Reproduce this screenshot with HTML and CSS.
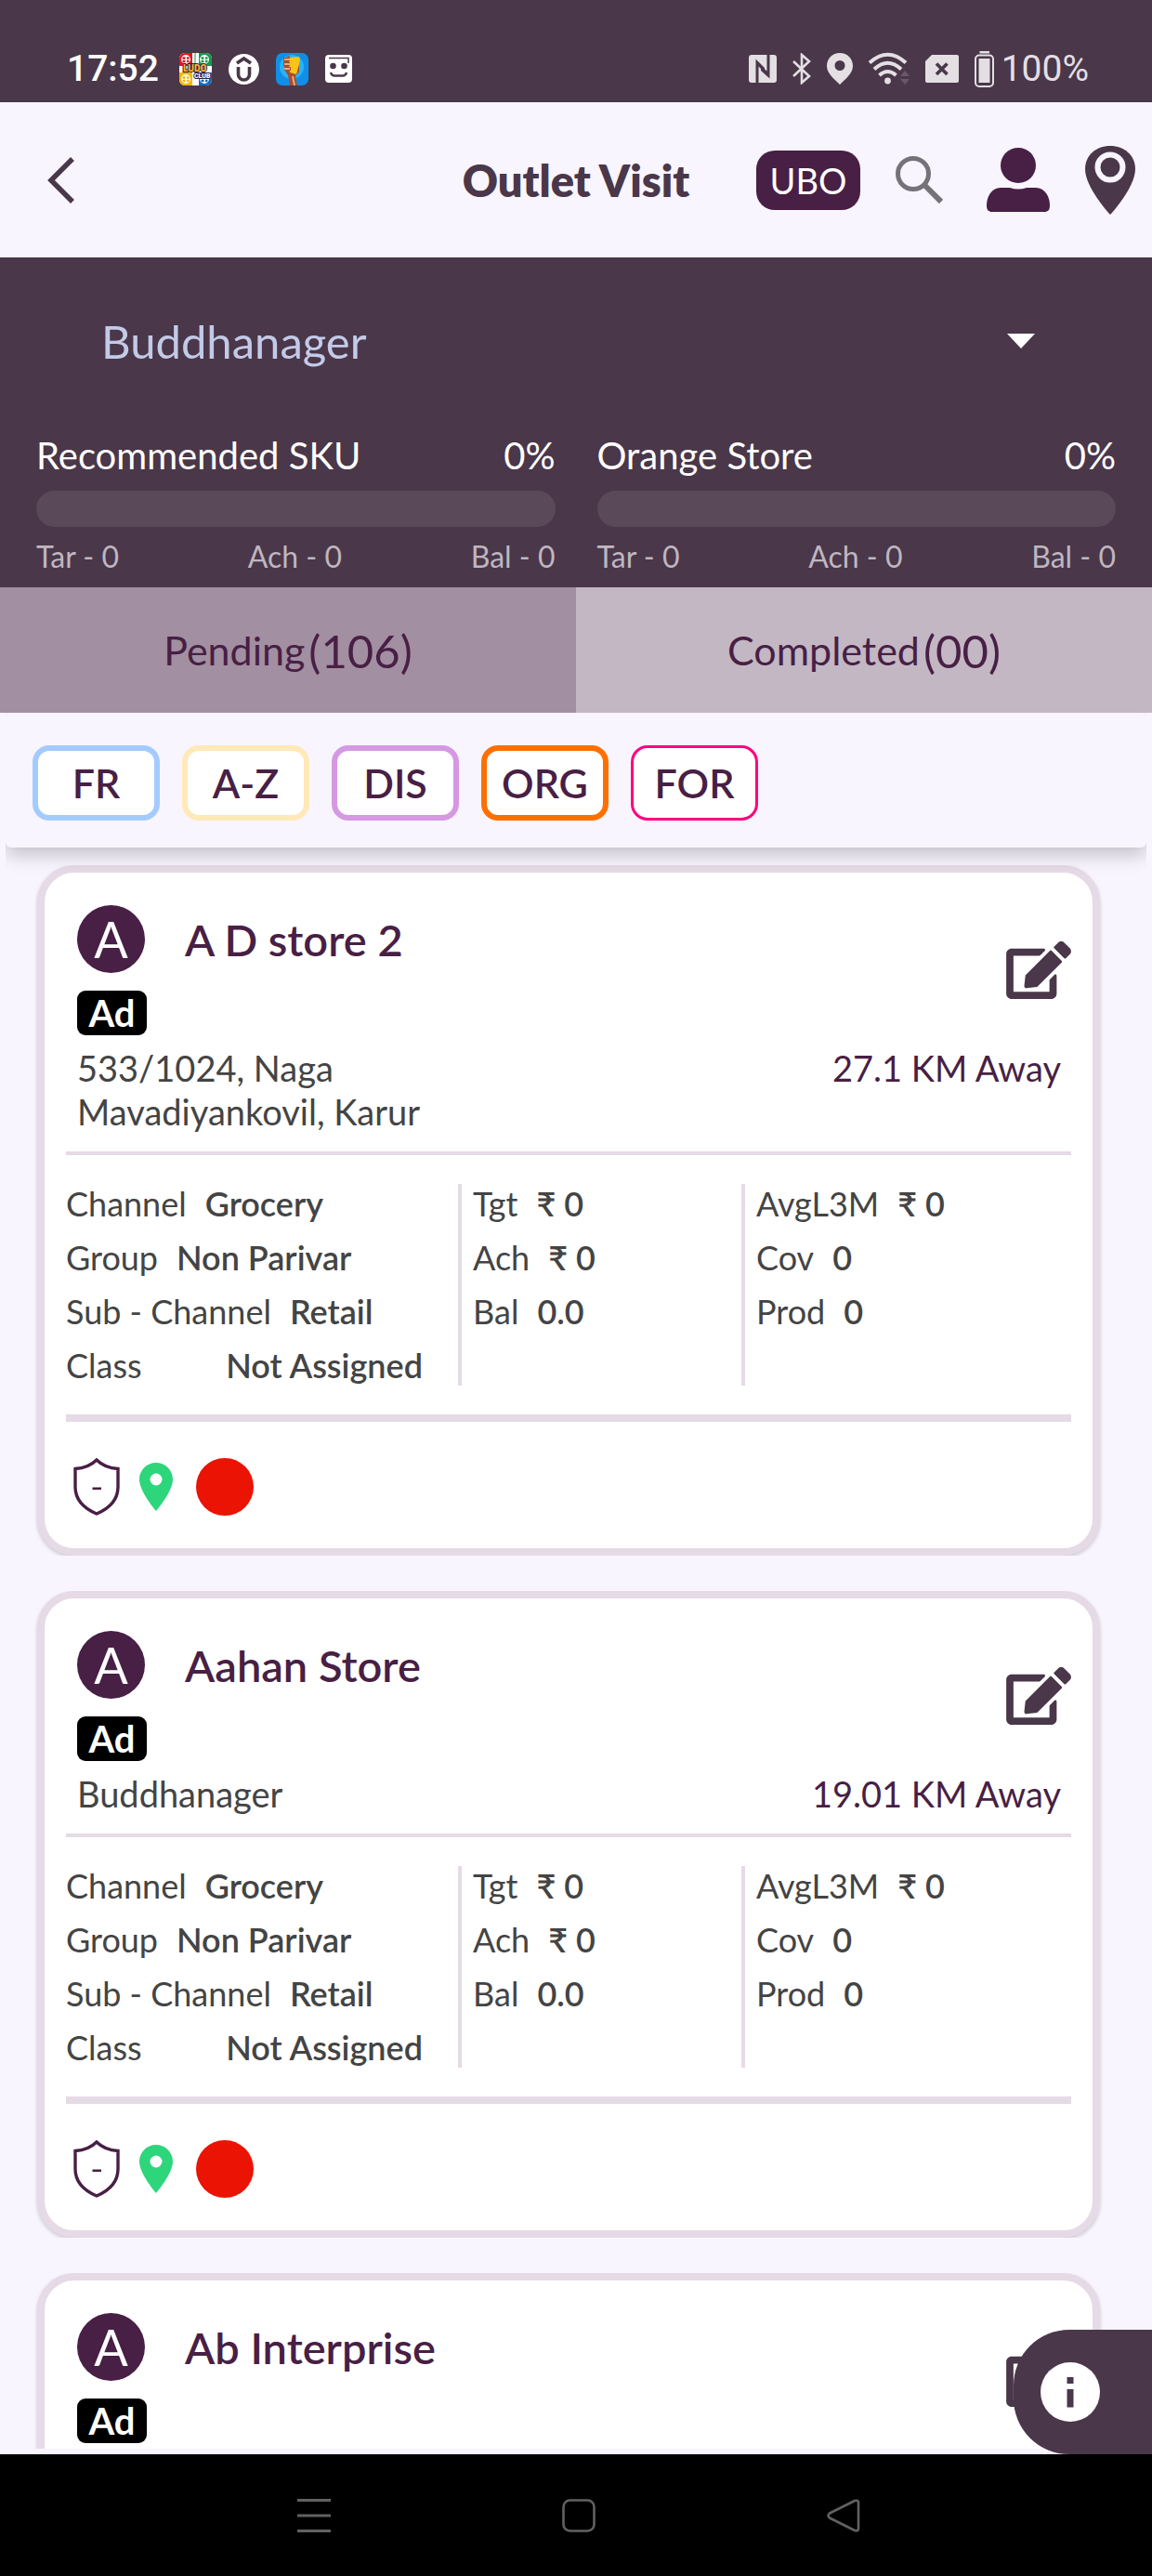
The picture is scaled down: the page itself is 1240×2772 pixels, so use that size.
FILE: index.html
```html
<!DOCTYPE html>
<html lang="en">
<head>
<meta charset="utf-8">
<meta name="viewport" content="width=device-width, initial-scale=1">
<title>Outlet Visit</title>
<link rel="stylesheet" href="styles.css">
</head>
<body>
<svg class="sprite" aria-hidden="true">
  <symbol id="edit" viewBox="0 0 576 512"><path fill="currentColor" d="M402.6 83.2l90.2 90.2c3.8 3.8 3.8 10 0 13.8L274.4 405.6l-92.8 10.3c-12.4 1.4-22.9-9.1-21.5-21.5l10.3-92.8L388.8 83.2c3.8-3.8 10-3.8 13.8 0zm162-22.9l-48.8-48.8c-15.2-15.2-39.9-15.2-55.2 0l-35.4 35.4c-3.8 3.8-3.8 10 0 13.8l90.2 90.2c3.8 3.8 10 3.8 13.8 0l35.4-35.4c15.2-15.3 15.2-40 0-55.2zM384 346.2V448H64V128h229.8c3.2 0 6.2-1.3 8.5-3.5l40-40c7.6-7.6 2.2-20.5-8.5-20.5H48C21.5 64 0 85.5 0 112v352c0 26.5 21.5 48 48 48h352c26.5 0 48-21.5 48-48V306.2c0-10.7-12.9-16-20.5-8.5l-40 40c-2.2 2.3-3.5 5.3-3.5 8.5z"/></symbol>
  <symbol id="shield" viewBox="0 0 50 62"><path fill="none" stroke="currentColor" stroke-width="3.4" d="M25 2C19 8 11 11 2 11.500V31C2 44 11 54 25 60 39 54 48 44 48 31V11.500C39 11 31 8 25 2Z"/><path fill="currentColor" d="M20.500 31.500h9.500v2.500h-9.500z"/></symbol>
  <symbol id="pin" viewBox="0 0 36 52"><path fill="#2dd57b" fill-rule="evenodd" d="M18 0C8 0 0 8 0 18c0 13 18 34 18 34s18-21 18-34C36 8 28 0 18 0Zm0 11.500a6.500 6.500 0 1 1 0 13 6.500 6.500 0 0 1 0-13Z"/></symbol>
</svg>

<div class="app">
  <div class="status-bar">
    <div class="status-left">
      <span class="clock">17:52</span>
      <svg width="35" height="35" viewBox="0 0 35 35" aria-hidden="true">
        <clipPath id="ludo"><rect width="35" height="35" rx="6"/></clipPath>
        <g clip-path="url(#ludo)"><rect width="35" height="35" fill="#fff"/>
        <path fill="#e8151b" d="M0 0h14v14H0z"/><path fill="#149a4a" d="M21 0h14v14H21z"/><path fill="#f6b800" d="M0 21h14v14H0z"/><path fill="#1268bd" d="M21 21h14v14H21z"/>
        <g fill="#fff"><circle cx="7" cy="7" r="5"/><circle cx="27" cy="7" r="5"/><circle cx="7" cy="28" r="5"/><circle cx="27" cy="28" r="5"/></g>
        <g stroke-width="2.500" stroke-dasharray="3 1.500"><path stroke="#e8151b" d="M3.500 5.500h7M3.500 9h7"/><path stroke="#149a4a" d="M23.500 5.500h7M23.500 9h7"/><path stroke="#f6b800" d="M3.500 26.500h7M3.500 30h7"/><path stroke="#1268bd" d="M23.500 26.500h7M23.500 30h7"/></g>
        <path stroke="#149a4a" d="M17 0v11"/></g>
        <text class="ludo-name" x="4" y="20">LUDO</text><text class="ludo-sub" x="16" y="27">CLUB</text>
      </svg>
      <svg width="33" height="33" viewBox="0 0 33 33" aria-hidden="true"><circle cx="16.500" cy="16.500" r="16.500" fill="#fff"/><path fill="none" stroke="#4a3749" stroke-width="3.600" d="M10.500 14v8a6 6 0 0 0 12 0v-8M9 10l7.500-5 7.500 5"/></svg>
      <svg width="35" height="35" viewBox="0 0 35 35" aria-hidden="true"><rect width="35" height="35" rx="7" fill="#118fe8"/><circle cx="17" cy="15" r="13" fill="#25b4fa"/><path fill="#a34e31" d="M9 6l5-3 3 5 8 6v6l-4 5 2 10h-8l-2-11-4-6z"/><path fill="#f9c414" d="M14 5l11-1 1 4-4 15-7-2-1-6z"/><path fill="none" stroke="#a34e31" stroke-width="4" d="M8 7h7M8 12h7M9 17h7"/><path fill="none" stroke="#eba979" stroke-width="2" d="M9 7h6M9 12h6M9 17h6M18 25l2 10"/></svg>
      <svg width="29" height="30" viewBox="0 0 29 30" aria-hidden="true"><rect width="29" height="30" rx="4" fill="#fff"/><path fill="none" stroke="#4a3749" stroke-width="1.500" d="M4 3.500h21V9"/><circle cx="8.500" cy="12" r="3.300" fill="#4a3749"/><circle cx="20.500" cy="12" r="3.300" fill="#4a3749"/><path fill="none" stroke="#4a3749" stroke-width="2.500" d="M6 19q1 3.500 4 3.500h9q3 0 4-3.500"/></svg>
    </div>
    <div class="status-right">
      <svg width="30" height="30" viewBox="0 0 30 30" aria-hidden="true"><rect width="30" height="30" rx="3" fill="#e3dfe3"/><path fill="#4a3749" d="M7.500 30V4.500L17 14V19L10.500 12.500V30ZM22.500 0V25.500L13 17V12L19.500 17.500V0Z"/></svg>
      <svg width="20" height="34" viewBox="0 0 20 34" aria-hidden="true"><path fill="none" stroke="#e3dfe3" stroke-width="2.600" d="M1 9l17 16-8 7V2l8 7L1 25"/></svg>
      <svg width="28" height="34" viewBox="0 0 28 34" aria-hidden="true"><path fill="#e3dfe3" fill-rule="evenodd" d="M14 0C6 0 0 6 0 14c0 8 8 14 14 20 6-6 14-12 14-20C28 6 22 0 14 0Zm0 8a5.500 5.500 0 1 1 0 11 5.500 5.500 0 0 1 0-11Z"/></svg>
      <svg width="44" height="36" viewBox="0 0 44 36" aria-hidden="true"><g fill="none" stroke="#e3dfe3" stroke-width="4"><path d="M1 11.500Q20.500-6 40 11.500"/><path d="M6 18.500Q20.500 5 35 18.500"/><path d="M11.500 25Q20.500 17 29.500 25"/></g><circle cx="20.500" cy="31" r="3.400" fill="#e3dfe3"/><path fill="#6b566a" d="M34 26l5-6 5 6zM34 29h10l-5 6z"/></svg>
      <svg width="36" height="30" viewBox="0 0 36 30" aria-hidden="true"><path fill="#e3dfe3" d="M7 0h27q2 0 2 2v26q0 2-2 2H2q-2 0-2-2V7z"/><path stroke="#4a3749" stroke-width="3.600" d="M12 9.500l11.500 11.500M23.500 9.500L12 21"/></svg>
      <div class="battery">
        <svg width="21" height="39" viewBox="0 0 21 39" aria-hidden="true"><path fill="#e3dfe3" d="M5.500 0h10.500v2.500H5.500zM4.500 8h12v26h-12z"/><rect x="1" y="4.500" width="19" height="33.500" rx="4" fill="none" stroke="#e3dfe3" stroke-width="2"/></svg>
        <span>100%</span>
      </div>
    </div>
  </div>

  <header class="header">
    <button class="icon-button back" aria-label="Back"><svg width="30" height="50" viewBox="0 0 30 50"><path fill="none" stroke="#4a3749" stroke-width="5.500" d="M27 2L4 25l23 23"/></svg></button>
    <h1>Outlet Visit</h1>
    <div class="actions">
      <button class="ubo">UBO</button>
      <button class="icon-button search" aria-label="Search"><svg width="51" height="51" viewBox="0 0 51 51"><circle cx="19" cy="19" r="16.500" fill="none" stroke="#757378" stroke-width="5"/><path stroke="#757378" stroke-width="6" d="M32 32l17 17"/></svg></button>
      <button class="icon-button" aria-label="Profile"><svg width="68" height="69" viewBox="0 0 68 69"><circle cx="34" cy="19" r="19" fill="#481f45"/><path fill="#481f45" d="M15 43h10q9 3 18 0h10c10 0 15 10 15 19 0 5-2 7-6 7H6c-4 0-6-2-6-7 0-9 5-19 15-19Z"/></svg></button>
      <button class="icon-button" aria-label="Map"><svg width="54" height="74" viewBox="0 0 54 74"><path fill="#4a3749" d="M27 0C12 0 0 10 0 25c0 20 27 49 27 49s27-29 27-49C54 10 42 0 27 0Z"/><circle cx="27" cy="23" r="13.500" fill="#4a3749" stroke="#f8f5ff" stroke-width="6"/></svg></button>
    </div>
  </header>

  <section class="summary">
    <div class="beat">
      <select aria-label="Beat"><option>Buddhanager</option></select>
      <svg width="30" height="16" viewBox="0 0 30 16" aria-hidden="true"><path fill="#fff" d="M0 0h30L15 16z"/></svg>
    </div>
    <div class="goals">
      <div class="goal">
        <div class="goal-head"><span>Recommended SKU</span><span>0%</span></div>
        <div class="track" role="progressbar" aria-label="Recommended SKU" aria-valuenow="0"></div>
        <div class="goal-foot"><span>Tar - 0</span><span>Ach - 0</span><span>Bal - 0</span></div>
      </div>
      <div class="goal">
        <div class="goal-head"><span>Orange Store</span><span>0%</span></div>
        <div class="track" role="progressbar" aria-label="Orange Store" aria-valuenow="0"></div>
        <div class="goal-foot"><span>Tar - 0</span><span>Ach - 0</span><span>Bal - 0</span></div>
      </div>
    </div>
  </section>

  <nav class="tabs">
    <button class="tab tab-active">Pending<span>(106)</span></button>
    <button class="tab">Completed<span>(00)</span></button>
  </nav>

  <div class="filters">
    <button class="chip chip-fr">FR</button>
    <button class="chip chip-az">A-Z</button>
    <button class="chip chip-dis">DIS</button>
    <button class="chip chip-org">ORG</button>
    <button class="chip chip-for">FOR</button>
  </div>

  <main class="list">
    <article class="card">
      <div class="card-head">
        <div>
          <div class="store"><span class="avatar">A</span><h2>A D store 2</h2></div>
          <span class="ad">Ad</span>
        </div>
        <button class="icon-button" aria-label="Edit A D store 2"><svg width="70" height="62"><use href="#edit"/></svg></button>
      </div>
      <div class="place"><address>533/1024, Naga<br>Mavadiyankovil, Karur</address><span>27.1 KM Away</span></div>
      <div class="facts">
        <dl><div><dt>Channel</dt><dd>Grocery</dd></div><div><dt>Group</dt><dd>Non Parivar</dd></div><div><dt>Sub - Channel</dt><dd>Retail</dd></div><div class="spread"><dt>Class</dt><dd>Not Assigned</dd></div></dl>
        <dl><div><dt>Tgt</dt><dd>₹ 0</dd></div><div><dt>Ach</dt><dd>₹ 0</dd></div><div><dt>Bal</dt><dd>0.0</dd></div></dl>
        <dl><div><dt>AvgL3M</dt><dd>₹ 0</dd></div><div><dt>Cov</dt><dd>0</dd></div><div><dt>Prod</dt><dd>0</dd></div></dl>
      </div>
      <div class="badges"><svg width="50" height="62"><use href="#shield"/></svg><svg width="36" height="52"><use href="#pin"/></svg><span class="dot"></span></div>
    </article>

    <article class="card">
      <div class="card-head">
        <div>
          <div class="store"><span class="avatar">A</span><h2>Aahan Store</h2></div>
          <span class="ad">Ad</span>
        </div>
        <button class="icon-button" aria-label="Edit Aahan Store"><svg width="70" height="62"><use href="#edit"/></svg></button>
      </div>
      <div class="place"><address>Buddhanager</address><span>19.01 KM Away</span></div>
      <div class="facts">
        <dl><div><dt>Channel</dt><dd>Grocery</dd></div><div><dt>Group</dt><dd>Non Parivar</dd></div><div><dt>Sub - Channel</dt><dd>Retail</dd></div><div class="spread"><dt>Class</dt><dd>Not Assigned</dd></div></dl>
        <dl><div><dt>Tgt</dt><dd>₹ 0</dd></div><div><dt>Ach</dt><dd>₹ 0</dd></div><div><dt>Bal</dt><dd>0.0</dd></div></dl>
        <dl><div><dt>AvgL3M</dt><dd>₹ 0</dd></div><div><dt>Cov</dt><dd>0</dd></div><div><dt>Prod</dt><dd>0</dd></div></dl>
      </div>
      <div class="badges"><svg width="50" height="62"><use href="#shield"/></svg><svg width="36" height="52"><use href="#pin"/></svg><span class="dot"></span></div>
    </article>

    <article class="card">
      <div class="card-head">
        <div>
          <div class="store"><span class="avatar">A</span><h2>Ab Interprise</h2></div>
          <span class="ad">Ad</span>
        </div>
        <button class="icon-button" aria-label="Edit Ab Interprise"><svg width="70" height="62"><use href="#edit"/></svg></button>
      </div>
    </article>
  </main>

  <footer class="system-nav">
    <button class="info" aria-label="Information"><svg width="64" height="64" viewBox="0 0 64 64"><circle cx="32" cy="32" r="32" fill="#fff"/><path fill="#4a3749" d="M28.500 16h7v7h-7zM28.500 29h7v19.500h-7z"/></svg></button>
    <button class="icon-button" aria-label="Recent apps"><svg width="36" height="36" viewBox="0 0 36 36"><path stroke="#616161" stroke-width="3" d="M0 1.500h36M0 18h36M0 34.500h36"/></svg></button>
    <button class="icon-button" aria-label="Home"><svg width="36" height="36" viewBox="0 0 36 36"><rect x="1.500" y="1.500" width="33" height="33" rx="7" fill="none" stroke="#616161" stroke-width="2.600"/></svg></button>
    <button class="icon-button" aria-label="Go back"><svg width="36" height="36" viewBox="0 0 36 36"><path fill="none" stroke="#616161" stroke-width="2.600" stroke-linejoin="round" d="M3 15.500 30 2q4-1 4 2v28q0 3-4 2L3 20.500q-3-2.500 0-5Z"/></svg></button>
  </footer>
</div>
</body>
</html>
```
FILE: styles.css
```css
:root {
  --ink: #4a3749;
  --plum: #481f45;
  --paper: #f8f5ff;
  --line: #e6dae6;
  --text: #444444;
}

* { box-sizing: border-box; }

body {
  margin: 0;
  background: var(--paper);
  color: var(--text);
  font-family: Lato, "Noto Sans", sans-serif;
}

h1, h2, dl, dd { margin: 0; }

button, select {
  margin: 0;
  padding: 0;
  border: 0;
  background: none;
  color: inherit;
  font: inherit;
}

svg { display: block; flex: none; }

.sprite {
  position: absolute;
  width: 0;
  height: 0;
}

.app {
  display: flex;
  flex-direction: column;
  height: 100vh;
}

/* Status bar */
.status-bar {
  display: flex;
  flex: none;
  justify-content: space-between;
  padding: 50px 68px 12px 72px;
  background: var(--ink);
  color: #e3dfe3;
  font-family: Roboto, sans-serif;
  font-size: 39px;
  line-height: 48px;
}

.status-left, .status-right {
  display: flex;
  align-items: center;
}

.status-left { gap: 18px; }
.status-right { gap: 17px; }
.clock { margin-right: 4px; color: #ffffff; font-weight: 500; }
.battery { display: flex; align-items: center; gap: 8px; }

.ludo-name, .ludo-sub {
  font-weight: 900;
  stroke: #2a1d4a;
  stroke-width: 2px;
  paint-order: stroke;
}

.ludo-name { fill: #ffb62e; font-size: 10px; }
.ludo-sub { fill: #ffffff; font-size: 7px; }

/* Header */
.header {
  display: grid;
  flex: none;
  grid-template-columns: 1fr auto 1fr;
  align-items: center;
  height: 167px;
  padding: 0 18px 0 18px;
}

.header h1 {
  color: var(--ink);
  font-size: 47px;
  font-weight: 800;
  line-height: 60px;
}

.back { justify-self: start; padding-left: 33px; }

.actions {
  display: flex;
  align-items: center;
  justify-content: flex-end;
  gap: 38px;
}

.ubo {
  width: 112px;
  height: 64px;
  border-radius: 20px;
  background: var(--plum);
  color: #ffffff;
  font-size: 38px;
}

.search { padding-right: 9px; }

/* Summary */
.summary {
  flex: none;
  padding: 55px 39px 14px;
  background: var(--ink);
  color: #ffffff;
}

.beat {
  display: flex;
  align-items: center;
  padding: 0 87px 0 70px;
}

.beat select {
  flex: 1;
  height: 70px;
  appearance: none;
  color: #c3cae8;
  font-size: 49px;
}

.goals {
  display: grid;
  grid-template-columns: 1fr 1fr;
  gap: 45px;
  padding-top: 63px;
}

.goal-head, .goal-foot {
  display: flex;
  justify-content: space-between;
}

.goal-head { font-size: 40px; line-height: 50px; }
.goal-foot { color: #bfb6c0; font-size: 32px; line-height: 38px; }

.track {
  height: 39px;
  margin: 13px 0;
  border-radius: 20px;
  background: #5a4958;
}

/* Tabs */
.tabs {
  display: grid;
  flex: none;
  grid-template-columns: 1fr 1fr;
}

.tab {
  display: flex;
  align-items: center;
  justify-content: center;
  gap: 4px;
  height: 135px;
  background: #c3b7c4;
  color: var(--plum);
  font-size: 43px;
}

.tab-active { background: #a28fa1; }
.tab span { font-size: 49px; }

/* Filters */
.filters {
  position: relative;
  z-index: 1;
  display: flex;
  flex: none;
  gap: 24px;
  margin: 0 6px;
  padding: 35px 29px 29px;
  border-radius: 6px;
  background: var(--paper);
  box-shadow: 0 8px 20px #00000038;
  clip-path: inset(0 0 -32px);
}

.chip {
  width: 137px;
  height: 81px;
  border: 6px solid;
  border-radius: 18px;
  background: #ffffff;
  font-size: 43px;
  font-weight: 600;
  text-align: center;
}

.chip-fr { border-color: #a4cbff; }
.chip-az { border-color: #ffe9b8; }
.chip-dis { border-color: #d698e3; }
.chip-org { border-color: #ff6f00; }
.chip-for { border: 3px solid #ff0080; }
.chip { color: var(--plum); }

/* Outlet cards */
.list {
  display: flex;
  flex: 1;
  flex-direction: column;
  gap: 38px;
  min-height: 0;
  margin-bottom: 6px;
  padding: 19px 56px 0 40px;
  overflow: hidden;
}

.card {
  flex: none;
  padding: 35px 23px;
  border: 8px solid var(--line);
  border-radius: 40px;
  background: #ffffff;
  box-shadow: 0 2px 4px #00000030;
  clip-path: inset(0 -3px 0 -3px);
}

.card-head {
  display: flex;
  align-items: center;
  justify-content: space-between;
  padding-left: 12px;
  color: var(--ink);
}

.store { display: flex; align-items: center; gap: 43px; }

.store h2 {
  color: var(--plum);
  font-size: 47px;
  font-weight: 600;
  line-height: 60px;
}

.avatar {
  width: 73px;
  height: 73px;
  border-radius: 50%;
  background: var(--plum);
  color: #ffffff;
  font-size: 54px;
  line-height: 73px;
  text-align: center;
}

.ad {
  display: block;
  width: 75px;
  height: 48px;
  margin-top: 19px;
  border-radius: 9px;
  background: #000000;
  color: #ffffff;
  font-size: 40px;
  font-weight: 700;
  line-height: 48px;
  text-align: center;
}

.place {
  display: flex;
  justify-content: space-between;
  padding: 12px 11px 19px 12px;
  border-bottom: 4px solid var(--line);
  font-size: 38px;
  line-height: 47px;
}

.place address { font-style: normal; }
.place span { color: var(--plum); }

.facts {
  display: grid;
  grid-template-columns: 426fr 305fr 351fr;
  padding: 31px 0;
  border-bottom: 8px solid var(--line);
  font-size: 36px;
  line-height: 43px;
}

.facts dl {
  display: flex;
  flex-direction: column;
  gap: 15px;
  padding-left: 12px;
}

.facts dl:first-child { padding: 0 38px 0 0; }
.facts dl:not(:last-child) { border-right: 4px solid var(--line); }
.facts dl > div { display: flex; gap: 20px; }
.facts dl > .spread { justify-content: space-between; }
.facts dd { font-weight: 600; }

.badges {
  display: flex;
  align-items: center;
  padding: 39px 0 0 8px;
  gap: 21px;
  color: var(--plum);
}

.dot {
  width: 62px;
  height: 62px;
  margin-left: 4px;
  border-radius: 50%;
  background: #eb1303;
}

/* System navigation */
.system-nav {
  position: relative;
  display: flex;
  flex: none;
  align-items: center;
  justify-content: center;
  gap: 249px;
  height: 131px;
  padding-left: 6px;
  background: #000000;
}

.info {
  position: absolute;
  right: 0;
  bottom: 100%;
  width: 149px;
  height: 134px;
  padding-left: 29px;
  border-radius: 60px 0 0 60px;
  background: var(--ink);
}
```
